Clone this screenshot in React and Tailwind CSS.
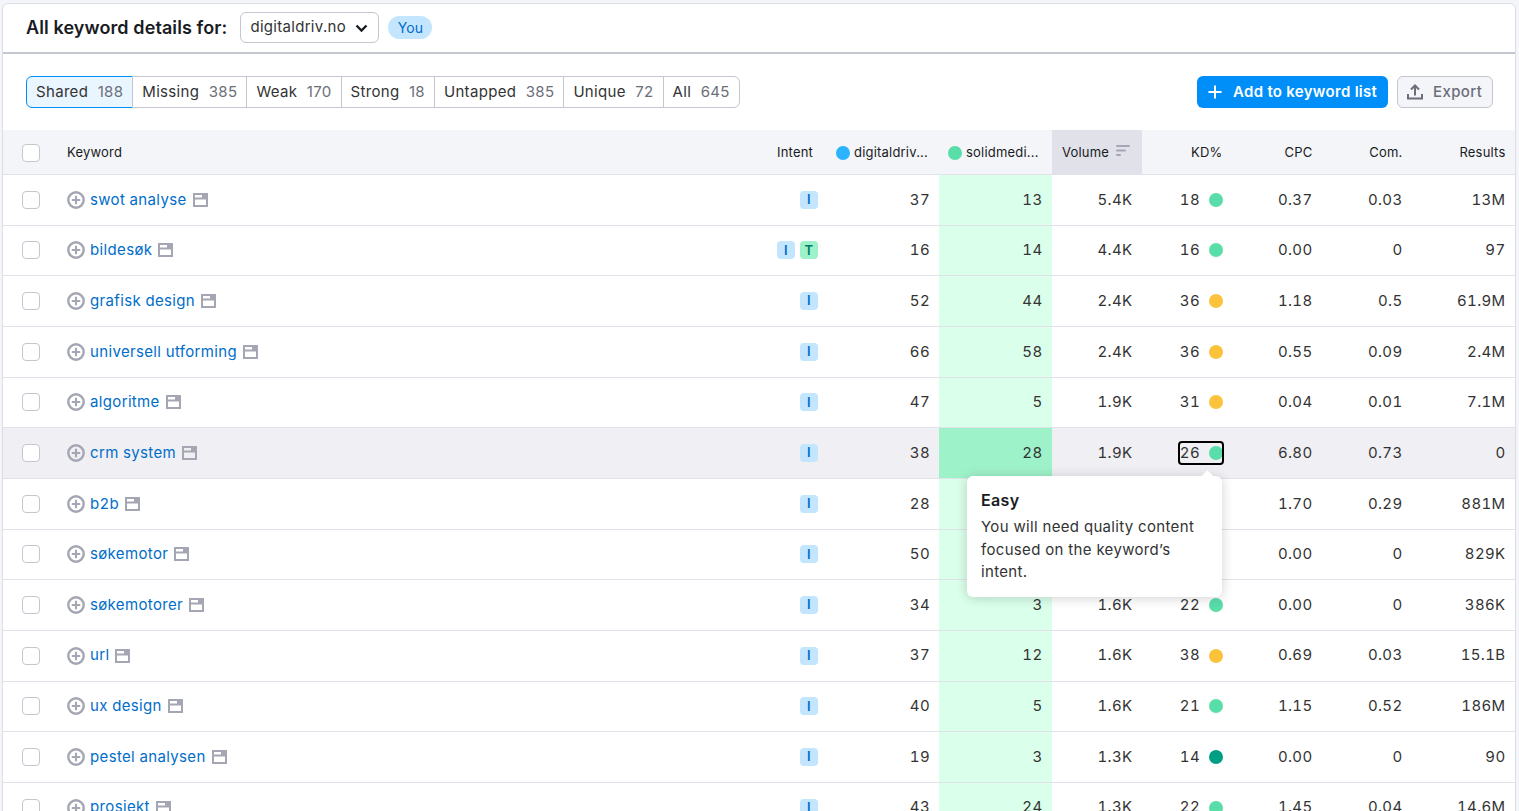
import { Plus } from "lucide-react";

const cols = "grid grid-cols-[54px_710px_60px_112px_113px_90px_90px_90px_90px_103px]";

const tabs = [
  ["Shared", 188],
  ["Missing", 385],
  ["Weak", 170],
  ["Strong", 18],
  ["Untapped", 385],
  ["Unique", 72],
  ["All", 645],
];

const dots = {
  green: "bg-[#59dda9]",
  yellow: "bg-[#fbc23c]",
  dark: "bg-[#009f81]",
};

const rows = [
  { kw: "swot analyse", intent: ["I"], you: 37, them: 13, vol: "5.4K", kd: 18, dot: "green", cpc: "0.37", com: "0.03", res: "13M" },
  { kw: "bildesøk", intent: ["I", "T"], you: 16, them: 14, vol: "4.4K", kd: 16, dot: "green", cpc: "0.00", com: "0", res: "97" },
  { kw: "grafisk design", intent: ["I"], you: 52, them: 44, vol: "2.4K", kd: 36, dot: "yellow", cpc: "1.18", com: "0.5", res: "61.9M" },
  { kw: "universell utforming", intent: ["I"], you: 66, them: 58, vol: "2.4K", kd: 36, dot: "yellow", cpc: "0.55", com: "0.09", res: "2.4M" },
  { kw: "algoritme", intent: ["I"], you: 47, them: 5, vol: "1.9K", kd: 31, dot: "yellow", cpc: "0.04", com: "0.01", res: "7.1M" },
  { kw: "crm system", intent: ["I"], you: 38, them: 28, vol: "1.9K", kd: 26, dot: "green", cpc: "6.80", com: "0.73", res: "0", active: true },
  { kw: "b2b", intent: ["I"], you: 28, cpc: "1.70", com: "0.29", res: "881M" },
  { kw: "søkemotor", intent: ["I"], you: 50, cpc: "0.00", com: "0", res: "829K" },
  { kw: "søkemotorer", intent: ["I"], you: 34, them: 3, vol: "1.6K", kd: 22, dot: "green", cpc: "0.00", com: "0", res: "386K" },
  { kw: "url", intent: ["I"], you: 37, them: 12, vol: "1.6K", kd: 38, dot: "yellow", cpc: "0.69", com: "0.03", res: "15.1B" },
  { kw: "ux design", intent: ["I"], you: 40, them: 5, vol: "1.6K", kd: 21, dot: "green", cpc: "1.15", com: "0.52", res: "186M" },
  { kw: "pestel analysen", intent: ["I"], you: 19, them: 3, vol: "1.3K", kd: 14, dot: "dark", cpc: "0.00", com: "0", res: "90" },
  { kw: "prosjekt", intent: ["I"], you: 43, them: 24, vol: "1.3K", kd: 22, dot: "green", cpc: "1.45", com: "0.04", res: "14.6M" },
];

const Checkbox = () => (
  <div className="w-[18px] h-[18px] ml-[19px] rounded-[4px] border border-[#c4c7cf] bg-white" />
);

const AddIcon = () => (
  <svg width="18" height="18" viewBox="0 0 18 18" fill="none" stroke="#a4a6b3" strokeWidth="2.4" className="shrink-0">
    <circle cx="9" cy="9" r="7.7" />
    <path d="M9 4.8v8.4M4.8 9h8.4" strokeWidth="2.1" />
  </svg>
);

const SerpIcon = () => (
  <svg width="15" height="14" viewBox="0 0 15 14" fill="none" className="shrink-0 ml-[6px]">
    <rect x="1" y="1" width="13" height="12" stroke="#a4a6b3" strokeWidth="2" />
    <path d="M1 5.5h13" stroke="#a4a6b3" strokeWidth="2" />
    <path d="M9 2v3h4V2z" fill="#a4a6b3" />
  </svg>
);

const IntentBadge = ({ type }) => (
  <span
    className={
      type === "T"
        ? "w-[18px] h-[18px] rounded-[4px] flex items-center justify-center text-[13px] font-semibold bg-[#9ef2c9] text-[#007c65]"
        : "w-[18px] h-[18px] rounded-[4px] flex items-center justify-center text-[13px] font-semibold bg-[#c4e5fe] text-[#006dca]"
    }
  >
    {type}
  </span>
);

const Row = ({ row }) => (
  <div className={`${cols} h-[50.67px] border-b border-[#e0e1e9] text-[15px] tracking-[0.35px] tabular-nums text-[#333] items-center ${row.active ? "bg-[#f0f0f4]" : "bg-white"}`}>
    <Checkbox />
    <div className="flex items-center pl-[10px] pr-2">
      <AddIcon />
      <span className="ml-[5px] text-[#006dca]">{row.kw}</span>
      <SerpIcon />
    </div>
    <div className="flex justify-end gap-[5px] pr-[9px]">
      {row.intent.map((t) => (
        <IntentBadge key={t} type={t} />
      ))}
    </div>
    <div className="text-right pr-[9px]">{row.you}</div>
    <div className={`h-full flex items-center justify-end pr-[9.5px] ${row.active ? "bg-[#9ef2c9]" : "bg-[#daffea]"}`}>{row.them}</div>
    <div className="text-right pr-[9.5px]">{row.vol}</div>
    <div className="flex justify-end pr-[9px]">
      {row.kd !== undefined && (
        <span className={`flex items-center gap-[9px] h-[22px] pl-px ${row.active ? "outline-2 -outline-offset-1 outline-black rounded-[3px]" : ""}`}>
          {row.kd}
          <span className={`w-[14px] h-[14px] rounded-full ${dots[row.dot]}`} />
        </span>
      )}
    </div>
    <div className="text-right pr-[9.5px]">{row.cpc}</div>
    <div className="text-right pr-[9.5px]">{row.com}</div>
    <div className="text-right pr-[9.5px]">{row.res}</div>
  </div>
);

export default function App() {
  return (
    <div className="h-[811px] overflow-hidden bg-[#f4f5f9] pt-[3px] pl-[2px] pr-[3px] font-['Inter',sans-serif] text-[#191b23]">
      <div className="relative bg-white rounded-t-[6px] h-[820px] border border-[#dcdde5]">
        {/* top bar */}
        <div className="h-[46px] pb-[2px] flex items-center pl-[23px] border-b-2 border-[#c4c7cf] box-content">
          <h2 className="text-[18px] font-semibold tracking-[0.1px]">All keyword details for:</h2>
          <button className="ml-[13px] h-[31px] w-[139px] flex items-center pl-[9px] rounded-[6px] border border-[#c4c7cf] text-[15px] tracking-[0.3px] text-[#333]">
            digitaldriv.no
            <svg width="13" height="9" viewBox="0 0 13 9" fill="none" stroke="#191b23" strokeWidth="2.3" className="ml-[9px] mt-[2px]">
              <path d="M1.5 1.5 6.5 6.5l5-5" />
            </svg>
          </button>
          <span className="ml-[9px] h-[23px] w-[44px] rounded-full bg-[#c4e5fe] text-[#006dca] text-[14px] flex items-center justify-center">You</span>
        </div>

        {/* tabs and buttons */}
        <div className="h-[76px] flex items-center justify-between pl-[23px] pr-[22px]">
          <div className="flex h-[32px] text-[15px] tracking-[0.32px]">
            {tabs.map(([name, n], i) => (
              <div
                key={name}
                className={
                  i === 0
                    ? "flex items-center gap-[9.5px] px-[9px] rounded-l-[6px] border border-[#008ff8] bg-[#e9f5ff]"
                    : "flex items-center gap-[9.5px] px-[9px] -ml-px border border-[#c4c7cf] last:rounded-r-[6px]"
                }
              >
                <span className="text-[#333]">{name}</span>
                <span className="text-[#6c6e79]">{n}</span>
              </div>
            ))}
          </div>
          <div className="flex gap-[9px]">
            <button className="h-[32px] w-[191px] rounded-[6px] bg-[#008ff8] text-white text-[15px] tracking-[0.3px] font-semibold flex items-center pl-[8px]">
              <Plus size={20} strokeWidth={2.4} className="mr-[8px]" />
              Add to keyword list
            </button>
            <button className="h-[32px] w-[96px] rounded-[6px] border border-[#c4c7cf] bg-[#f4f5f9] text-[#6c6e79] text-[15px] tracking-[0.4px] font-medium flex items-center pl-[8px]">
              <svg width="18" height="18" viewBox="0 0 18 18" fill="none" stroke="#6c6e79" strokeWidth="2" className="mr-[9px]">
                <path d="M2 11v4.5h14V11" />
                <path d="M9 12.5V3M5 6.5l4-4 4 4" />
              </svg>
              Export
            </button>
          </div>
        </div>

        {/* table header */}
        <div className={`${cols} h-[45px] pt-px bg-[#f4f5f9] border-b border-[#e0e1e9] text-[13px] tracking-[0.2px] items-center`}>
          <Checkbox />
          <div className="pl-[10px]">Keyword</div>
          <div className="pl-[10px]">Intent</div>
          <div className="flex items-center pl-[9px]">
            <span className="w-[14px] h-[14px] rounded-full bg-[#2bb3ff] mr-[4px]" />
            digitaldriv...
          </div>
          <div className="flex items-center pl-[9px]">
            <span className="w-[14px] h-[14px] rounded-full bg-[#59dda9] mr-[4px]" />
            solidmedi...
          </div>
          <div className="h-[44px] -mt-px pt-[2px] self-start flex items-center pl-[10px] bg-[#e0e1e9]">
            Volume
            <svg width="14" height="12" viewBox="0 0 14 12" fill="#a4a6b3" className="ml-[7px] -mt-[4px]">
              <rect x="0" y="0" width="14" height="2" rx="1" />
              <rect x="0" y="4.5" width="10" height="2" rx="1" />
              <rect x="0" y="9" width="5" height="2" rx="1" />
            </svg>
          </div>
          <div className="text-right pr-[9.5px]">KD%</div>
          <div className="text-right pr-[9.5px]">CPC</div>
          <div className="text-right pr-[9.5px]">Com.</div>
          <div className="text-right pr-[9.5px]">Results</div>
        </div>

        {rows.map((row) => (
          <Row key={row.kw} row={row} />
        ))}

        {/* KD tooltip */}
        <div className="absolute left-[964px] top-[472px] w-[255px] h-[121px] bg-white rounded-[6px] shadow-[0_1px_12px_rgba(25,27,35,0.2)] px-[14px] pt-[14px] text-[15px] leading-[22.5px] tracking-[0.33px] text-[#333]">
          <div className="absolute right-[10px] -top-[4px] w-[9px] h-[9px] rotate-45 bg-white" />
          <div className="font-semibold text-[#191b23] text-[16px] leading-[20px] mb-[6px]">Easy</div>
          You will need quality content focused on the keyword’s intent.
        </div>
      </div>
    </div>
  );
}
